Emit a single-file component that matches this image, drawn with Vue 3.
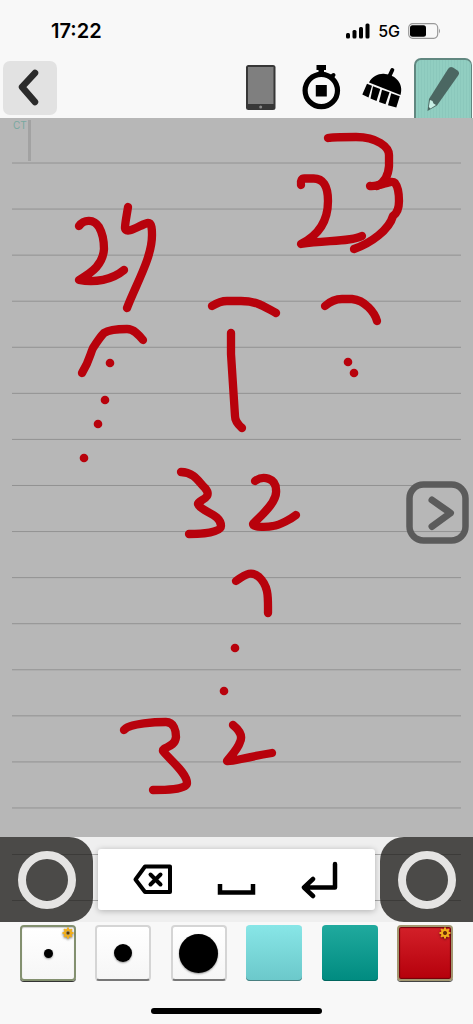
<script setup>
import { ref } from 'vue'

const rules = Array.from({ length: 15 }, (_, i) => 163 + i * 46.07)

const strokes = [
  'M79 226C84 219 94 219 99 227C103 234 104 242 104 249C103 264 93 272 79 280C95 283 112 280 124 270',
  'M128 207C127 214 125 223 125 228C126 236 143 223 148 223C152 223 152 230 152 235C152 258 136 284 127 308',
  'M82 373C90 360 90 354 93 348Q100 337 104 333Q110 329 127 329C134 329 139 335 143 340',
  'M301 185Q300 178 305 178.500H313Q328 178 328 201C328 223 317 236 301 244C326 240 350 242 362 236',
  'M328 138Q332 137 356 137C377 137 389 147 389 155V166Q388 181 377 186',
  'M370 186C381 187 391 179 395 183Q399 188 399 201Q399 212 393 216C389 230 371 243 354 249',
  'M212 306Q220 301 227 301H241C257 301 263 306 276 313',
  'M231 333V354L235 416Q235 422 242 428',
  'M325 306Q333 299 342 299H352C365 300 375 313 377 321',
  'M181 472C195 472 200 484 205 488C214 499 197 500 198 504C201 512 221 514 221 526C221 533 201 534 189 534',
  'M255 481C263 475 276 478 276 490C278 503 257 519 253 524C253 528 269 527 273 526C280 525 291 519 296 515',
  'M236 581C247 573 252 571 259 577C269 586 268 598 268 613',
  'M124 730C129 723 158 722 166 722C174 722 176 731 176 737C175 748 162 747 163 751C170 760 187 773 187 783C187 790 163 790 153 790',
  'M233 725Q244 734 240 742C238 749 230 757 227 761C231 762 242 758 272 753',
]

const dots = [
  [110, 363], [105, 400], [98, 424], [84, 458], [348, 362],
  [354, 373], [235, 648], [224, 691],
]

const swatches = [
  { name: 'Thin pen', kind: 'pen', size: 'thin', chosen: true },
  { name: 'Medium pen', kind: 'pen', size: 'medium' },
  { name: 'Thick pen', kind: 'pen', size: 'thick' },
  { name: 'Aqua ink', kind: 'aqua' },
  { name: 'Green ink', kind: 'green' },
  { name: 'Red ink', kind: 'red', chosen: true },
]

const tool = ref('pencil')
const teeth = [0, 45, 90, 135, 180, 225, 270, 315]
</script>

<template>
  <div class="screen">
    <header>
      <div class="status">
        <time>17:22</time>
        <div class="signals">
          <svg width="24" height="16" viewBox="0 0 24 16" aria-hidden="true">
            <rect x="0" y="10" width="4" height="5.500" rx="1.500" />
            <rect x="6.500" y="7" width="4" height="8.500" rx="1.500" />
            <rect x="13" y="4" width="4" height="11.500" rx="1.500" />
            <rect x="19.500" y="0.500" width="4" height="15" rx="1.500" />
          </svg>
          <span>5G</span>
          <svg width="33" height="16" viewBox="0 0 33 16" aria-hidden="true">
            <rect x="0.700" y="0.700" width="29" height="14.600" rx="4" fill="none" stroke="#999" stroke-width="1.200" />
            <rect x="2" y="2.300" width="16" height="11.400" rx="2.500" />
            <path d="M31 5.500Q33 8 31 10.500Z" fill="#999" />
          </svg>
        </div>
      </div>
      <nav class="toolbar">
        <button class="back" aria-label="Back">
          <svg width="54" height="54" viewBox="0 0 54 54"><path d="M32 12L19 26L32 41" fill="none" stroke="#2b2b2b" stroke-width="6.500" stroke-linecap="round" stroke-linejoin="round" /></svg>
        </button>
        <div class="tools">
          <button aria-label="Device">
            <svg width="60" height="60" viewBox="234 58 60 60">
              <rect x="246" y="65" width="29.500" height="45" rx="2.500" fill="#373737" />
              <rect x="248" y="67" width="25.500" height="37" fill="#7f7f7f" />
              <circle cx="260.700" cy="107" r="1.500" fill="#888" />
            </svg>
          </button>
          <button aria-label="Timer">
            <svg width="60" height="60" viewBox="294 58 60 60">
              <circle cx="321.300" cy="90.500" r="16.200" fill="none" stroke="#000" stroke-width="5.200" />
              <path d="M316.500 65H326V70H324V76H318.500V70H316.500ZM315.800 85H326.800V96.500H315.800Z" />
              <path d="M331 77.500L333.500 75" stroke="#000" stroke-width="4" stroke-linecap="round" />
            </svg>
          </button>
          <button aria-label="Clear">
            <svg width="60" height="60" viewBox="354 58 60 60">
              <path d="M389 77L392.300 70" stroke="#000" stroke-width="4" stroke-linecap="round" />
              <path d="M369 82.500C372 76 380 73 385 74C396 75 404 84 400.500 95Z" />
              <path d="M367 83.700L372 85.700L368.500 97.500L362.300 94.500ZM373 86.300L380.300 88.900L376.500 101L370.500 98.500ZM382 89.700L389.600 92.300L385.500 104.300L379 102ZM391.200 93.200L399.800 96.200L396.300 107.500L388 105.200Z" />
            </svg>
          </button>
          <button class="pencil" aria-label="Pencil" :aria-pressed="tool === 'pencil'" @click="tool = 'pencil'">
            <svg width="55" height="58" viewBox="416 60 55 58">
              <path d="M429 99L448 69Q450 66 453 67.500L457.500 70.500Q460 72.500 458.500 75L437 105.500L427.500 111Z" fill="#4b6762" />
              <path d="M430 100L432.500 101L433.500 103.500L436 105L430.500 108.500L428.800 107Z" fill="#c7eee4" />
            </svg>
          </button>
        </div>
      </nav>
    </header>

    <main>
      <span class="prefix">CT</span>
      <span class="caret"></span>
      <svg class="sheet" viewBox="0 118 473 719" role="img" aria-label="Handwritten notes">
        <path v-for="y in rules" :key="y" :d="`M12 ${y}H461`" class="rule" />
        <path v-for="d in strokes" :key="d" :d="d" class="ink" />
        <circle v-for="([x, y], i) in dots" :key="i" :cx="x" :cy="y" r="4.300" fill="#b8020c" />
      </svg>
      <button class="next" aria-label="Next page">
        <svg width="63" height="63" viewBox="0 0 63 63" fill="none" stroke="#5b5b5b">
          <rect x="3.500" y="3.500" width="56" height="56" rx="14" stroke-width="6.500" />
          <path d="M26 19L44.500 32L26 45.500" stroke-width="7" stroke-linecap="round" stroke-linejoin="round" />
        </svg>
      </button>
    </main>

    <section class="keys">
      <button class="knob left" aria-label="Left control"><i></i></button>
      <div class="panel">
        <button aria-label="Delete">
          <svg width="40" height="32" viewBox="133 864 40 32" fill="none" stroke="#000" stroke-width="4">
            <path d="M145 866.500H170V892H145L135.500 879.500Z" stroke-linejoin="round" />
            <path d="M150.500 874.500L160.500 884.500M160.500 874.500L150.500 884.500" stroke-linecap="round" />
          </svg>
        </button>
        <button aria-label="Space">
          <svg width="40" height="32" viewBox="217 864 40 32"><path d="M220 884V892.500H253V884" fill="none" stroke="#000" stroke-width="4.500" /></svg>
        </button>
        <button aria-label="Enter">
          <svg width="40" height="38" viewBox="302 860 40 38" fill="none" stroke="#000" stroke-width="4.500" stroke-linecap="round" stroke-linejoin="round"><path d="M336 863V886.500H306M314 878L305 886.500L314 895" /></svg>
        </button>
      </div>
      <button class="knob right" aria-label="Right control"><i></i></button>
    </section>

    <footer>
      <div class="palette">
        <button v-for="s in swatches" :key="s.name" class="swatch" :class="[s.kind, { chosen: s.chosen }]" :aria-label="s.name">
          <i v-if="s.size" :class="s.size"></i>
          <svg v-if="s.chosen" class="gear" width="12" height="12" viewBox="-6 -6 12 12" aria-hidden="true">
            <rect v-for="a in teeth" :key="a" x="-1" y="-5.500" width="2" height="3" fill="#f0ae1c" :transform="`rotate(${a})`" />
            <circle r="3" fill="none" stroke="#f0ae1c" stroke-width="2" />
            <circle r="1.500" fill="#5b3900" />
          </svg>
        </button>
      </div>
      <div class="home"></div>
    </footer>
  </div>
</template>

<style>
body { background: #f8f8f8; }
</style>

<style scoped>
.screen { display: flex; flex-direction: column; min-height: 100vh; background: #f8f8f8; font-family: Inter, "Liberation Sans", sans-serif; }
button { border: 0; padding: 0; background: none; display: flex; align-items: center; justify-content: center; box-sizing: border-box; }
svg { display: block; }
.status { display: flex; align-items: center; justify-content: space-between; height: 58px; padding: 4px 32px 0 51px; box-sizing: border-box; }
time { font-size: 20px; font-weight: 600; }
.signals { display: flex; align-items: center; gap: 8px; font-size: 16px; font-weight: 500; }
.toolbar { display: flex; justify-content: space-between; align-items: center; height: 60px; padding: 0 1px 0 3px; }
.back { width: 54px; height: 54px; border-radius: 7px; background: #e2e2e2; }
.tools { display: flex; }
.pencil { width: 58px; height: 60px; border: 2px solid #618780; border-right-width: 1px; border-bottom: 0; border-radius: 7px 7px 0 0; background: repeating-linear-gradient(90deg, #91cec1 0 2px, #8bc8bc 2px 3px); }
main { position: relative; flex: 1; background: #b7b7b7; }
.sheet { width: 100%; }
.rule { stroke: #929292; stroke-width: 1; }
.ink { fill: none; stroke: #b8020c; stroke-width: 8.300; stroke-linecap: round; stroke-linejoin: round; }
.prefix { position: absolute; left: 13px; top: 2px; font-size: 10px; line-height: 10px; color: #79a8a0; }
.caret { position: absolute; left: 28px; top: 2px; width: 3px; height: 41px; background: #a2a2a2; }
.next { position: absolute; right: 4px; top: 363px; }
.keys { position: relative; display: flex; justify-content: space-between; align-items: center; height: 85px; background: linear-gradient(#ababab, #ababab) 0 17px / 100% 1px no-repeat, linear-gradient(#ababab, #ababab) 0 63px / 100% 1px no-repeat, #efefef; }
.knob { width: 93px; height: 85px; background: linear-gradient(#3c3b39, #3c3b39) 12px 17px / 100% 1px no-repeat, linear-gradient(#3c3b39, #3c3b39) 12px 63px / 100% 1px no-repeat, #4b4a48; }
.knob.left { border-radius: 0 24px 24px 0; }
.knob.right { border-radius: 24px 0 0 24px; background-position: -12px 17px, -12px 63px, 0 0; }
.knob i { width: 42px; height: 42px; border: 8px solid #e5e4e3; border-radius: 50%; }
.panel { display: flex; align-items: center; justify-content: space-between; flex: 1; height: 61px; margin: 0 5px; padding: 0 34px 0 35px; background: #fff; border-radius: 3px; box-shadow: 0 1px 6px #0004; }
footer { height: 102px; }
.palette { display: flex; justify-content: space-between; padding: 3px 20px 0; }
.swatch { position: relative; width: 56px; height: 56px; border-radius: 4px; }
.pen { border: 2px solid #d5d5d5; border-bottom: 2px solid #777; background: linear-gradient(#fff, #f6f6f6); }
.pen.chosen { border: 2px solid #83906f; box-shadow: inset 0 1px 1px #0003, 0 1px 0 #333; }
.pen i { border-radius: 50%; background: #000; box-shadow: 0 1px 2px #0006; }
.thin { width: 9px; height: 9px; }
.medium { width: 18px; height: 18px; }
.thick { width: 39px; height: 39px; }
.aqua { background: linear-gradient(#88e6e7, #6bc8ca); box-shadow: inset 0 -1px 0 #497f80; }
.green { background: linear-gradient(#20aa9e, #008b80); box-shadow: inset 0 -1px 0 #00655e; }
.red { border: 2px solid #a29770; background: linear-gradient(#d32029, #b5000b); box-shadow: inset 0 0 1px 1px #730009, 0 1px 0 #444; }
.gear { position: absolute; top: 0; right: 0; filter: drop-shadow(0 1px 1px #0008); }
.home { width: 36%; height: 6px; margin: 27px auto 0; border-radius: 3px; background: #000; }
</style>
